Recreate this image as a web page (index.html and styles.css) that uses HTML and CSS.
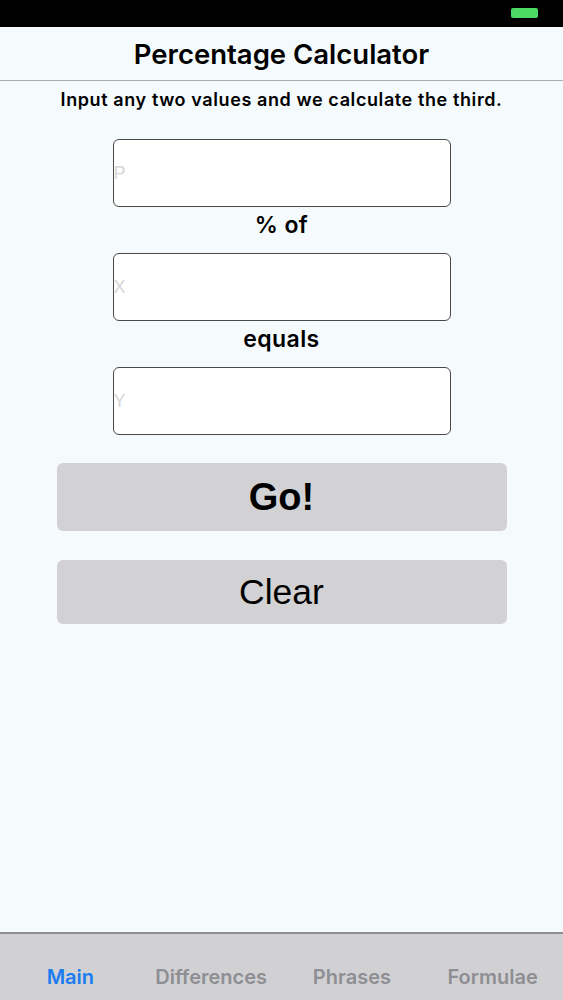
FILE: index.html
```html
<!DOCTYPE html>
<html lang="en">
<head>
    <meta charset="UTF-8">
    <meta name="viewport" content="width=device-width, initial-scale=1.0">
    <title>Percentage Calculator</title>
    <link rel="stylesheet" href="styles.css">
</head>
<body>
    <div class="status-bar">
        <div class="battery"></div>
    </div>

    <header class="nav-bar">
        <h1>Percentage Calculator</h1>
    </header>

    <main class="calc">
        <p class="hint">Input any two values and we calculate the third.</p>

        <input class="field" type="text" placeholder="P">
        <div class="joiner">% of</div>
        <input class="field" type="text" placeholder="X">
        <div class="joiner">equals</div>
        <input class="field" type="text" placeholder="Y">

        <div class="actions">
            <button class="action go">Go!</button>
            <button class="action clear">Clear</button>
        </div>
    </main>

    <nav class="tab-bar">
        <a class="tab active">Main</a>
        <a class="tab">Differences</a>
        <a class="tab">Phrases</a>
        <a class="tab">Formulae</a>
    </nav>
</body>
</html>
```

FILE: styles.css
```css
html, body {
    height: 100%;
}

body {
    margin: 0;
    font-family: Inter, "Liberation Sans", sans-serif;
    background: #f5fafc;
    color: #000;
    display: flex;
    flex-direction: column;
}

/* Status bar */
.status-bar {
    height: 27px;
    background: #000;
    display: flex;
    justify-content: flex-end;
    align-items: center;
    padding-right: 25px;
    flex-shrink: 0;
}

.battery {
    width: 27px;
    height: 10px;
    background: #4cd964;
    border-radius: 2px;
    margin-top: -1px;
}

/* Navigation header */
.nav-bar {
    height: 53px;
    border-bottom: 1px solid #a9acb0;
    display: flex;
    align-items: center;
    justify-content: center;
    flex-shrink: 0;
}

.nav-bar h1 {
    margin: 0;
    font-size: 27.5px;
    font-weight: 600;
}

/* Calculator body */
.calc {
    flex: 1;
    display: flex;
    flex-direction: column;
    align-items: center;
}

.hint {
    margin: 9px 0 0;
    font-size: 18px;
    font-weight: 600;
    letter-spacing: 0.6px;
    line-height: 20px;
}

.field {
    box-sizing: border-box;
    width: 338px;
    height: 68px;
    margin-top: 29px;
    padding: 0;
    border: 1px solid #4a4a4a;
    border-radius: 6px;
    background: #fff;
    font-family: "Liberation Sans", sans-serif;
    font-size: 18px;
    outline: none;
}

.field::placeholder {
    color: #d6d6d8;
}

.joiner + .field {
    margin-top: 15px;
}

.joiner {
    font-size: 23px;
    font-weight: 600;
    letter-spacing: 0.4px;
    line-height: 26px;
    margin-top: 5px;
}

.actions {
    width: 450px;
    margin-top: 28px;
    display: flex;
    flex-direction: column;
    gap: 29px;
}

.action {
    border: none;
    border-radius: 6px;
    background: #d2d2d5;
    color: #000;
    font-family: "Liberation Sans", sans-serif;
    cursor: pointer;
}

.go {
    height: 68px;
    font-size: 38px;
    font-weight: bold;
}

.clear {
    height: 64px;
    font-size: 35.5px;
}

/* Tab bar */
.tab-bar {
    height: 66px;
    border-top: 2px solid #8e8e92;
    background: #d1d1d4;
    display: grid;
    grid-template-columns: repeat(4, 1fr);
    align-items: center;
    flex-shrink: 0;
}

.tab {
    text-align: center;
    font-size: 20px;
    font-weight: 600;
    color: #8e8e93;
    padding-top: 20px;
}

.tab.active {
    color: #1a7cf0;
}
```
